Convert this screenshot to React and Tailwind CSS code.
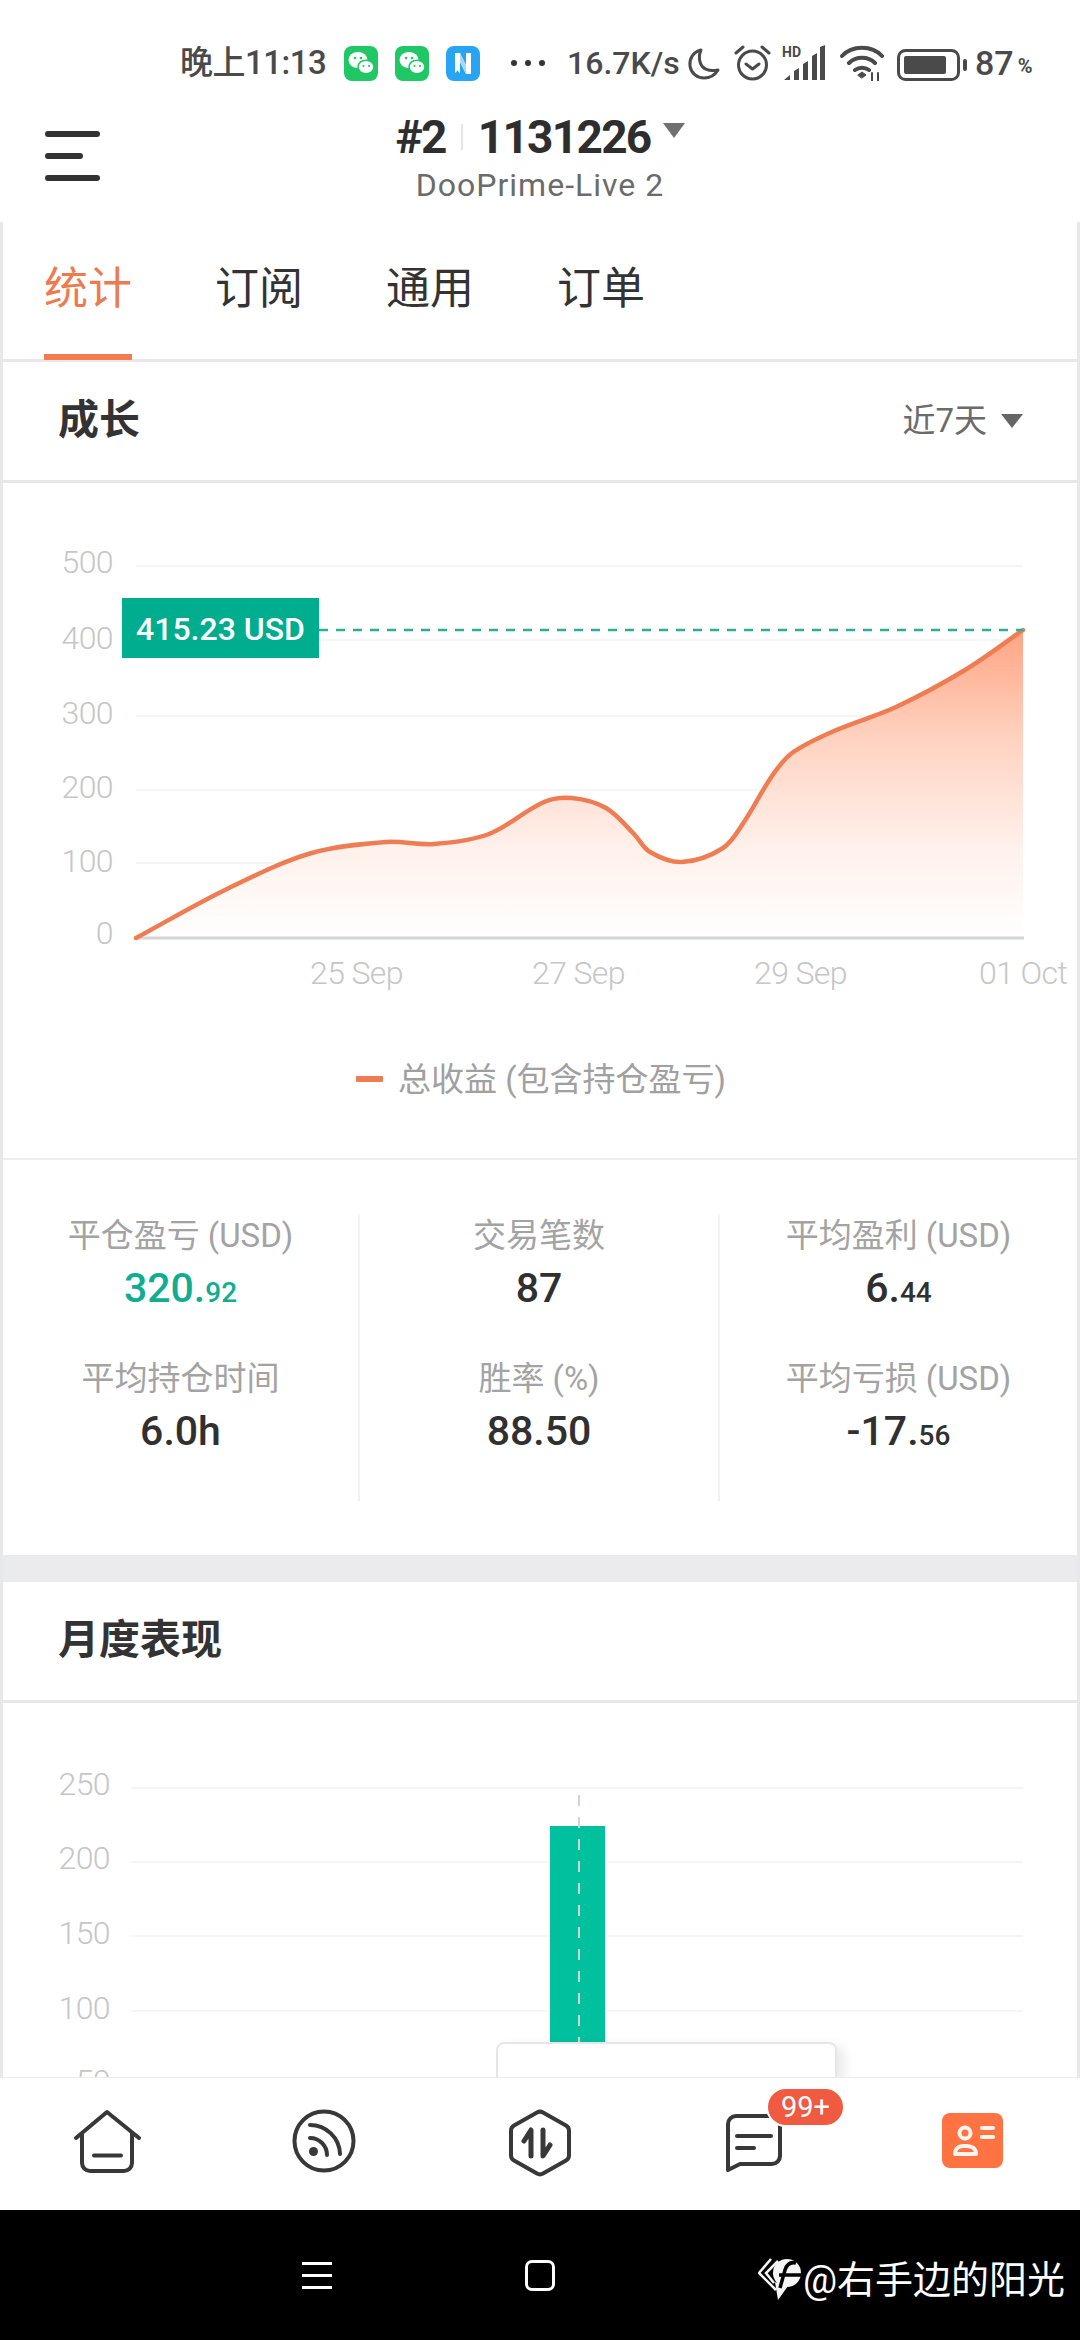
import React from 'react';

// spline through the points read off the reference, handles scaled to segment length
const smooth = (pts) => {
  const unit = (a, b) => {
    const l = Math.hypot(b[0] - a[0], b[1] - a[1]) || 1;
    return [(b[0] - a[0]) / l, (b[1] - a[1]) / l];
  };
  let d = `M${pts[0][0]} ${pts[0][1]}`;
  for (let i = 0; i < pts.length - 1; i++) {
    const p0 = pts[i - 1] || pts[i];
    const p1 = pts[i];
    const p2 = pts[i + 1];
    const p3 = pts[i + 2] || p2;
    const len = Math.hypot(p2[0] - p1[0], p2[1] - p1[1]) / 3;
    const t1 = unit(p0, p2);
    const t2 = unit(p1, p3);
    d += ` C${p1[0] + t1[0] * len} ${p1[1] + t1[1] * len} ${p2[0] - t2[0] * len} ${p2[1] - t2[1] * len} ${p2[0]} ${p2[1]}`;
  }
  return d;
};

const curve = [
  [136, 938], [227, 889], [310, 853.5], [386, 842], [434, 844], [489, 834], [544, 802], [572, 798],
  [606, 808], [634, 834], [650, 852], [682, 862], [723, 848], [744, 822], [772, 776], [792, 753],
  [834, 731], [896, 707], [965, 670], [1023, 630],
];

const WeChat = () => (
  <svg width="34" height="35" viewBox="0 0 34 35">
    <rect width="34" height="35" rx="8" fill="#1fc765" />
    <ellipse cx="14" cy="14" rx="9.5" ry="8" fill="#fff" />
    <ellipse cx="22" cy="21" rx="8" ry="6.8" fill="#fff" stroke="#1fc765" strokeWidth="1.5" />
    <circle cx="11" cy="12" r="1.3" fill="#1fc765" />
    <circle cx="17" cy="12" r="1.3" fill="#1fc765" />
    <circle cx="19.5" cy="20" r="1.1" fill="#1fc765" />
    <circle cx="25" cy="20" r="1.1" fill="#1fc765" />
  </svg>
);

const StatusBar = () => (
  <div className="flex h-[90px] items-end pb-[9px] pl-[180px] text-[#4a4a4a]">
    <span className="w-[164px] text-[33px] leading-[36px] font-medium tracking-[-0.5px]">晚上11:13</span>
    <div className="flex gap-[17px]">
      <WeChat />
      <WeChat />
      <svg width="34" height="35" viewBox="0 0 34 35">
        <rect width="34" height="35" rx="8" fill="#27a5f2" />
        <path d="M9 7h5l6 12V7h5v21h-5L14 16v11l-2.500-2.500L9 27z" fill="#fff" />
        <path d="M14 7l6 12v9L14 16z" fill="#a9d8f7" />
      </svg>
    </div>
    <svg className="ml-[30px] mb-[14px]" width="36" height="8" viewBox="0 0 36 8" fill="#333">
      <circle cx="4" cy="4" r="3" />
      <circle cx="18" cy="4" r="3" />
      <circle cx="32" cy="4" r="3" />
    </svg>
    <span className="ml-[21px] w-[120px] text-[32px] leading-[36px] font-medium">16.7K/s</span>
    <svg width="34" height="34" viewBox="0 0 34 34" fill="none" stroke="#4a4a4a" strokeWidth="3" strokeLinejoin="round">
      <path d="M14 3C6 5 2 12 3 19c1 7 7 12 14 12 6 0 11-3 14-8-9 2-16-1-18-8-1-4-1-8 1-12z" />
    </svg>
    <svg className="ml-[13px]" width="37" height="37" viewBox="0 0 37 37" fill="none" stroke="#4a4a4a" strokeWidth="3" strokeLinecap="round" strokeLinejoin="round">
      <circle cx="18.500" cy="21" r="14" />
      <path d="M12 20l6.500 5 6.500-5M2 9l7-6M35 9l-7-6" />
    </svg>
    <svg className="ml-[11px]" width="44" height="36" viewBox="0 0 44 36" fill="#4a4a4a">
      <text x="0" y="12" className="text-[14px] font-bold">HD</text>
      <path d="M2 35l6-5v5zM12 26l5-3v12h-5zM21 19l5-3v19h-5zM30 11l5-3v27h-5zM38 2l5-2v35h-5z" />
    </svg>
    <svg className="ml-[14px]" width="44" height="36" viewBox="0 0 44 36" fill="none" stroke="#4a4a4a" strokeWidth="4" strokeLinecap="round">
      <path d="M2 11C12 0 32 0 42 11M9 18c7-7 19-7 26 0M15 25c4-3 10-3 14 0" />
      <path d="M18 30l4-3 4 3-4 3z" fill="#4a4a4a" strokeWidth="1" />
      <path d="M32 28v8M38 28v8" strokeWidth="2" />
    </svg>
    <svg className="ml-[13px]" width="72" height="32" viewBox="0 0 72 32" fill="none">
      <rect x="1.500" y="1.500" width="60" height="29" rx="7" stroke="#4a4a4a" strokeWidth="3" />
      <rect x="7" y="7" width="42" height="18" rx="2" fill="#4a4a4a" />
      <rect x="66" y="10" width="4" height="12" rx="2" fill="#4a4a4a" />
    </svg>
    <span className="ml-[6px] text-[34px] leading-[36px] font-medium">87</span>
    <span className="ml-[4px] text-[20px] leading-[30px] font-bold">%</span>
  </div>
);

const Header = () => (
  <div className="relative flex h-[132px] flex-col items-center pt-[24px]">
    <div className="absolute left-[45px] top-[41px] flex flex-col gap-[16px]">
      <div className="h-[6px] w-[55px] rounded-full bg-[#333]" />
      <div className="h-[6px] w-[38px] rounded-full bg-[#333]" />
      <div className="h-[6px] w-[55px] rounded-full bg-[#333]" />
    </div>
    <div className="flex items-center text-[46px] leading-[46px] font-bold tracking-[-1.7px] text-[#2e2e2e]">
      <span>#2</span>
      <div className="mx-[15px] h-[26px] w-[2px] bg-[#e5e5e5]" />
      <span>1131226</span>
      <div className="mb-[14px] ml-[12px] h-0 w-0 border-x-[11px] border-t-[15px] border-x-transparent border-t-[#707070]" />
    </div>
    <span className="mt-[7px] text-[32px] leading-[36px] tracking-[1px] text-[#6b6b6b]">DooPrime-Live 2</span>
  </div>
);

const Tabs = () => (
  <div className="flex h-[140px] gap-[83px] border-b-[3px] border-[#e8e8e8] pl-[41px] text-[44px] leading-[44px] text-[#333]">
    <div className="-mb-[1px] flex w-[88px] flex-col items-center justify-between">
      <span className="mt-[45px] text-[#ee7a50]">统计</span>
      <div className="h-[6px] w-full bg-[#f47c4e]" />
    </div>
    <span className="mt-[45px] w-[88px] text-center">订阅</span>
    <span className="mt-[45px] w-[88px] text-center">通用</span>
    <span className="mt-[45px] w-[88px] text-center">订单</span>
  </div>
);

const SectionTitle = ({ title, children }) => (
  <div className="flex h-[121px] items-center justify-between border-b-[3px] border-[#e8e8e8] pl-[55px] pr-[54px]">
    <span className="text-[41px] font-bold text-[#333]">{title}</span>
    {children}
  </div>
);

const axis = 'fill-[#c6c6c6] text-[32px] font-light tracking-[-0.6px]';

const GrowthChart = () => (
  <svg className="block" width="1074" height="675" viewBox="3 483 1074 675">
    <defs>
      <linearGradient id="area" x1="0" y1="630" x2="0" y2="938" gradientUnits="userSpaceOnUse">
        <stop offset="0" stopColor="#ffa483" />
        <stop offset="0.35" stopColor="#ffd2c0" />
        <stop offset="0.7" stopColor="#fff0ea" />
        <stop offset="1" stopColor="#ffffff" />
      </linearGradient>
    </defs>
    {[566, 640, 716, 790, 863].map((y) => (
      <line key={y} x1="136" x2="1023" y1={y} y2={y} stroke="#f5f5f5" strokeWidth="2" />
    ))}
    <path d={`${smooth(curve)} L1023 938 L136 938 Z`} fill="url(#area)" />
    <line x1="136" x2="1024" y1="938" y2="938" stroke="#d4d4d4" strokeWidth="3" />
    <path d={smooth(curve)} fill="none" stroke="#ef7d53" strokeWidth="4.500" strokeLinecap="round" />
    {[['500', 573], ['400', 649], ['300', 724], ['200', 798], ['100', 872], ['0', 944]].map(([t, y]) => (
      <text key={t} x="113" y={y} textAnchor="end" className={axis}>{t}</text>
    ))}
    <text x="310" y="984" className={axis}>25 Sep</text>
    <text x="532" y="984" className={axis}>27 Sep</text>
    <text x="754" y="984" className={axis}>29 Sep</text>
    <text x="979" y="984" className={axis}>01 Oct</text>
    <line x1="319" x2="1023" y1="630" y2="630" stroke="#2bae97" strokeWidth="2.500" strokeDasharray="9 8" />
    <rect x="122" y="598" width="197" height="60" fill="#00ad8e" />
    <text x="220.500" y="640" textAnchor="middle" className="fill-white text-[32px] font-medium">415.23 USD</text>
    <rect x="356" y="1076" width="27" height="6" rx="1" fill="#ef7d53" />
    <text x="398" y="1091" className="fill-[#a0a0a0] text-[33px]">总收益 (包含持仓盈亏)</text>
  </svg>
);

const Stat = ({ label, value, small, green }) => (
  <div className="flex flex-col items-center">
    <span className="text-[33px] leading-[42px] text-[#a3a3a3]">{label}</span>
    <span className={`mt-[8px] text-[41px] leading-[46px] font-medium ${green ? 'text-[#10ad93]' : 'text-[#303030]'}`}>
      {value}
      {small && <span className="text-[28px] leading-none">{small}</span>}
    </span>
  </div>
);

const Stats = () => (
  <div className="h-[397px] border-t-2 border-[#eeeeee] pt-[55px]">
    <div className="grid h-[286px] grid-cols-[355px_362px_1fr]">
      <div className="flex flex-col gap-[47px]">
        <Stat label="平仓盈亏 (USD)" value="320." small="92" green />
        <Stat label="平均持仓时间" value="6.0h" />
      </div>
      <div className="flex flex-col gap-[47px] border-x-2 border-[#f2f2f2]">
        <Stat label="交易笔数" value="87" />
        <Stat label="胜率 (%)" value="88.50" />
      </div>
      <div className="flex flex-col gap-[47px]">
        <Stat label="平均盈利 (USD)" value="6." small="44" />
        <Stat label="平均亏损 (USD)" value="-17." small="56" />
      </div>
    </div>
  </div>
);

const MonthlyChart = () => (
  <div className="relative h-[374px] overflow-hidden">
    <svg className="block" width="1074" height="374" viewBox="3 1703 1074 374">
      {[1788, 1862, 1936, 2011, 2085].map((y) => (
        <line key={y} x1="131" x2="1023" y1={y} y2={y} stroke="#f5f5f5" strokeWidth="2" />
      ))}
      {[['250', 1795], ['200', 1869], ['150', 1944], ['100', 2019], ['50', 2092]].map(([t, y]) => (
        <text key={t} x="110" y={y} textAnchor="end" className={axis}>{t}</text>
      ))}
      <rect x="550" y="1826" width="55" height="240" fill="#00c09d" />
      <line x1="579" x2="579" y1="1795" y2="2044" stroke="#cfd4d4" strokeWidth="2" strokeDasharray="11 11" />
    </svg>
    <div className="absolute left-[493px] top-[339px] h-[60px] w-[341px] rounded-lg border-2 border-[#e6e6e6] bg-white shadow-[8px_4px_12px_rgba(0,0,0,0.08)]" />
  </div>
);

const BottomNav = () => (
  <div className="relative flex h-[133px] items-start border-t border-[#ececec] bg-white pt-[31px] text-[#383838]">
    <div className="flex w-[216px] justify-center">
      <svg width="70" height="66" viewBox="0 0 70 66" fill="none" stroke="currentColor" strokeWidth="4" strokeLinecap="round" strokeLinejoin="round">
        <path d="M3 29L34 3l32 26M9 24v30a8 8 0 0 0 8 8h34a8 8 0 0 0 8-8V24M21 46.500h27" />
      </svg>
    </div>
    <div className="flex w-[216px] justify-center">
      <svg width="64" height="64" viewBox="-32 -32 64 64" fill="none" stroke="currentColor" strokeWidth="4" strokeLinecap="round">
        <circle r="29.500" />
        <path d="M-14-3A17 17 0 0 1 3 14M-14-16A30 30 0 0 1 16 13" />
        <circle cx="-10.500" cy="10.500" r="4.500" fill="currentColor" stroke="none" />
      </svg>
    </div>
    <div className="flex w-[216px] justify-center">
      <svg width="62" height="68" viewBox="0 0 62 68" fill="none" stroke="currentColor" strokeWidth="4" strokeLinecap="round" strokeLinejoin="round">
        <path d="M28 3.500a6 6 0 0 1 6 0l23 13a6 6 0 0 1 3 5v25a6 6 0 0 1-3 5l-23 13a6 6 0 0 1-6 0l-23-13a6 6 0 0 1-3-5v-25a6 6 0 0 1 3-5z" />
        <path d="M15 32l7-11v26M34 21v26l7-11" strokeWidth="5" />
      </svg>
    </div>
    <div className="relative flex w-[216px] justify-center">
      <svg className="mt-[4px] -ml-[4px]" width="58" height="60" viewBox="0 0 58 60" fill="none" stroke="currentColor" strokeWidth="4" strokeLinecap="round" strokeLinejoin="round">
        <path d="M3 57V11a8 8 0 0 1 8-8h36a8 8 0 0 1 8 8v32a8 8 0 0 1-8 8H15z" />
        <path d="M12 23h34M12 35h17" />
      </svg>
      <div className="absolute left-[118px] top-[-22px] flex h-[40px] w-[79px] items-center justify-center rounded-full border-2 border-white bg-[#ef5a41] text-[29px] leading-none text-white">99+</div>
    </div>
    <div className="flex w-[216px] justify-center">
      <svg className="mt-[4px]" width="61" height="55" viewBox="0 0 61 55">
        <rect width="61" height="55" rx="8" fill="#ff7342" />
        <g fill="none" stroke="#fff5ee" strokeWidth="4" strokeLinecap="round">
          <circle cx="23" cy="20" r="5.500" />
          <path d="M13 41c0-5 3-8 8-8h4c5 0 9 3 9 8z" strokeLinejoin="round" />
          <path d="M40 15h11M40 24h11" />
        </g>
      </svg>
    </div>
  </div>
);

const SystemBar = () => (
  <div className="relative flex h-[130px] items-start justify-center bg-black pt-[50px]">
    <div className="absolute left-[302px] top-[52px] flex w-[30px] flex-col gap-[9px]">
      <div className="h-[3px] bg-white" />
      <div className="h-[3px] bg-white" />
      <div className="h-[3px] bg-white" />
    </div>
    <div className="h-[31px] w-[30px] rounded-[7px] border-[3px] border-white" />
    <div className="absolute left-[758px] top-[48px] flex items-start">
      <svg width="46" height="44" viewBox="0 0 46 44" fill="none">
        <path d="M13 1L1 15l17 17M20 3L8 15l8 10" stroke="#f5f5f5" strokeWidth="2.500" />
        <circle cx="29" cy="15" r="14" fill="#f5f5f5" />
        <path d="M17 24l3 18 10-14z" fill="#f5f5f5" />
        <path d="M38 5q-8-2-11 7l-5 18M21 17h23" stroke="#000" strokeWidth="3.500" />
      </svg>
      <span className="-ml-[1px] text-[38px] leading-[44px] text-white">@右手边的阳光</span>
    </div>
  </div>
);

export default function App() {
  return (
    <div className="flex h-[2340px] w-[1080px] flex-col overflow-hidden bg-white font-[Roboto,'Noto_Sans_CJK_SC',sans-serif]">
      <StatusBar />
      <Header />
      <div className="h-[1855px] overflow-hidden border-x-[3px] border-[#e8e8e8]">
        <Tabs />
        <SectionTitle title="成长">
          <div className="flex items-center gap-[14px]">
            <span className="text-[33px] text-[#6b6b6b]">近7天</span>
            <div className="h-0 w-0 border-x-[11px] border-t-[14px] border-x-transparent border-t-[#666]" />
          </div>
        </SectionTitle>
        <GrowthChart />
        <Stats />
        <div className="h-[27px] bg-[#e9ebec]" />
        <SectionTitle title="月度表现" />
        <MonthlyChart />
      </div>
      <BottomNav />
      <SystemBar />
    </div>
  );
}
